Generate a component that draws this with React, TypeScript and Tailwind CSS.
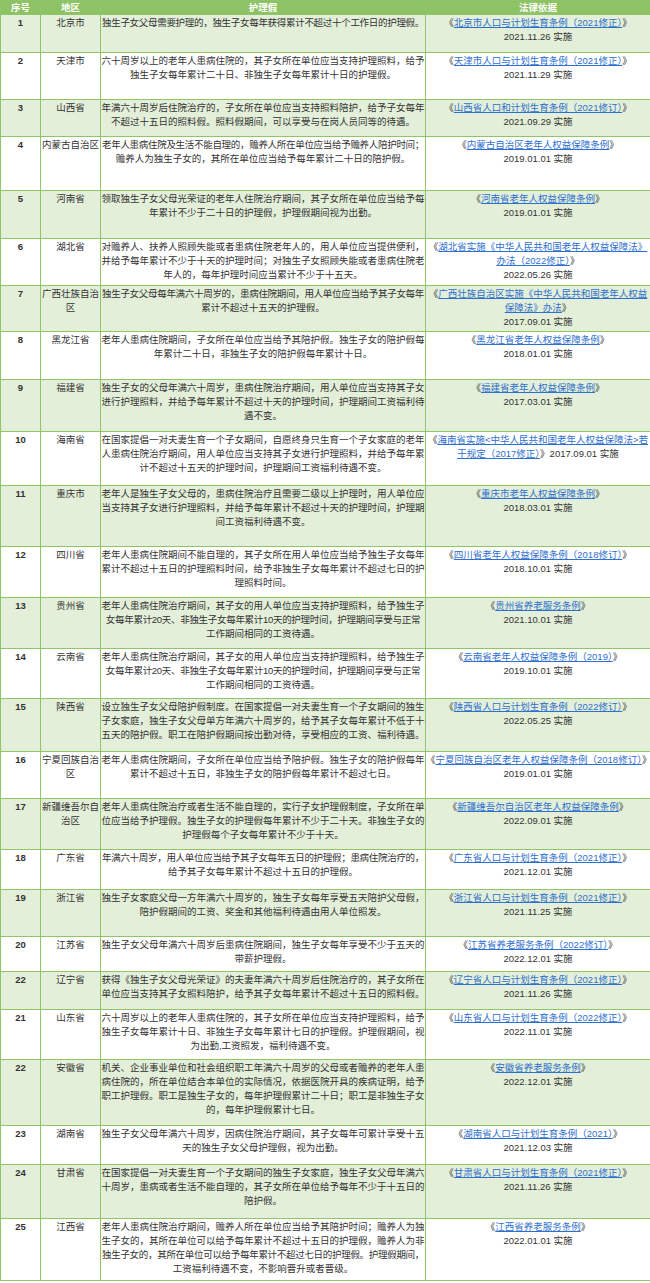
import React from "react";

type Row = { no: string; h: string; region: string[]; care: string[]; law: string[] };

const rows: Row[] = [
  { no: "1", h: "h-[38px]", region: ["北京市"], care: ["独生子女父母需要护理的，独生子女每年获得累计不超过十个工作日的护理假。"], law: ["《[北京市人口与计划生育条例（2021修正）]》", "2021.11.26 实施"] },
  { no: "2", h: "h-[47px]", region: ["天津市"], care: ["六十周岁以上的老年人患病住院的，其子女所在单位应当支持护理照料，给予", "独生子女每年累计二十日、非独生子女每年累计十日的护理假。"], law: ["《[天津市人口与计划生育条例（2021修正）]》", "2021.11.29 实施"] },
  { no: "3", h: "h-[37px]", region: ["山西省"], care: ["年满六十周岁后住院治疗的，子女所在单位应当支持照料陪护，给予子女每年", "不超过十五日的照料假。照料假期间，可以享受与在岗人员同等的待遇。"], law: ["《[山西省人口和计划生育条例（2021修订）]》", "2021.09.29 实施"] },
  { no: "4", h: "h-[54px]", region: ["内蒙古自治区"], care: ["老年人患病住院及生活不能自理的，赡养人所在单位应当给予赡养人陪护时间；", "赡养人为独生子女的，其所在单位应当给予每年累计二十日的陪护假。"], law: ["《[内蒙古自治区老年人权益保障条例]》", "2019.01.01 实施"] },
  { no: "5", h: "h-[48px]", region: ["河南省"], care: ["领取独生子女父母光荣证的老年人住院治疗期间，其子女所在单位应当给予每", "年累计不少于二十日的护理假，护理假期间视为出勤。"], law: ["《[河南省老年人权益保障条例]》", "2019.01.01 实施"] },
  { no: "6", h: "h-[47px]", region: ["湖北省"], care: ["对赡养人、扶养人照顾失能或者患病住院老年人的，用人单位应当提供便利，", "并给予每年累计不少于十天的护理时间；对独生子女照顾失能或者患病住院老", "年人的，每年护理时间应当累计不少于十五天。"], law: ["《[湖北省实施《中华人民共和国老年人权益保障法》]", "[办法（2022修正）]》", "2022.05.26 实施"] },
  { no: "7", h: "h-[46px]", region: ["广西壮族自治", "区"], care: ["独生子女父母每年满六十周岁的，患病住院期间，用人单位应当给予其子女每年", "累计不超过十五天的护理假。"], law: ["《[广西壮族自治区实施《中华人民共和国老年人权益]", "[保障法》办法]》", "2017.09.01 实施"] },
  { no: "8", h: "h-[48px]", region: ["黑龙江省"], care: ["老年人患病住院期间，子女所在单位应当给予其陪护假。独生子女的陪护假每", "年累计二十日，非独生子女的陪护假每年累计十日。"], law: ["《[黑龙江省老年人权益保障条例]》", "2018.01.01 实施"] },
  { no: "9", h: "h-[52px]", region: ["福建省"], care: ["独生子女的父母年满六十周岁，患病住院治疗期间，用人单位应当支持其子女", "进行护理照料，并给予每年累计不超过十天的护理时间，护理期间工资福利待", "遇不变。"], law: ["《[福建省老年人权益保障条例]》", "2017.03.01 实施"] },
  { no: "10", h: "h-[54px]", region: ["海南省"], care: ["在国家提倡一对夫妻生育一个子女期间，自愿终身只生育一个子女家庭的老年", "人患病住院治疗期间，用人单位应当支持其子女进行护理照料，并给予每年累", "计不超过十五天的护理时间，护理期间工资福利待遇不变。"], law: ["《[海南省实施<中华人民共和国老年人权益保障法>若]", "[干规定（2017修正）]》2017.09.01 实施"] },
  { no: "11", h: "h-[61px]", region: ["重庆市"], care: ["老年人是独生子女父母的，患病住院治疗且需要二级以上护理时，用人单位应", "当支持其子女进行护理照料，并给予每年累计不超过十天的护理时间，护理期", "间工资福利待遇不变。"], law: ["《[重庆市老年人权益保障条例]》", "2018.03.01 实施"] },
  { no: "12", h: "h-[51px]", region: ["四川省"], care: ["老年人患病住院期间不能自理的，其子女所在用人单位应当给予独生子女每年", "累计不超过十五日的护理照料时间，给予非独生子女每年累计不超过七日的护", "理照料时间。"], law: ["《[四川省老年人权益保障条例（2018修订）]》", "2018.10.01 实施"] },
  { no: "13", h: "h-[51px]", region: ["贵州省"], care: ["老年人患病住院治疗期间，其子女的用人单位应当支持护理照料，给予独生子", "女每年累计20天、非独生子女每年累计10天的护理时间，护理期间享受与正常", "工作期间相同的工资待遇。"], law: ["《[贵州省养老服务条例]》", "2021.10.01 实施"] },
  { no: "14", h: "h-[50px]", region: ["云南省"], care: ["老年人患病住院治疗期间，其子女的用人单位应当支持护理照料，给予独生子", "女每年累计20天、非独生子女每年累计10天的护理时间，护理期间享受与正常", "工作期间相同的工资待遇。"], law: ["《[云南省老年人权益保障条例（2019）]》", "2019.10.01 实施"] },
  { no: "15", h: "h-[53px]", region: ["陕西省"], care: ["设立独生子女父母陪护假制度。在国家提倡一对夫妻生育一个子女期间的独生", "子女家庭，独生子女父母单方年满六十周岁的，给予其子女每年累计不低于十", "五天的陪护假。职工在陪护假期间按出勤对待，享受相应的工资、福利待遇。"], law: ["《[陕西省人口与计划生育条例（2022修订）]》", "2022.05.25 实施"] },
  { no: "16", h: "h-[47px]", region: ["宁夏回族自治", "区"], care: ["老年人患病住院期间，子女所在单位应当给予陪护假。独生子女的陪护假每年", "累计不超过十五日，非独生子女的陪护假每年累计不超过七日。"], law: ["《[宁夏回族自治区老年人权益保障条例（2018修订）]》", "2019.01.01 实施"] },
  { no: "17", h: "h-[51px]", region: ["新疆维吾尔自", "治区"], care: ["老年人患病住院治疗或者生活不能自理的，实行子女护理假制度，子女所在单", "位应当给予护理假。独生子女的护理假每年累计不少于二十天。非独生子女的", "护理假每个子女每年累计不少于十天。"], law: ["《[新疆维吾尔自治区老年人权益保障条例]》", "2022.09.01 实施"] },
  { no: "18", h: "h-[40px]", region: ["广东省"], care: ["年满六十周岁，用人单位应当给予其子女每年五日的护理假；患病住院治疗的，", "给予其子女每年累计不超过十五日的护理假。"], law: ["《[广东省人口与计划生育条例（2021修正）]》", "2021.12.01 实施"] },
  { no: "19", h: "h-[47px]", region: ["浙江省"], care: ["独生子女家庭父母一方年满六十周岁的，独生子女每年享受五天陪护父母假，", "陪护假期间的工资、奖金和其他福利待遇由用人单位照发。"], law: ["《[浙江省人口与计划生育条例（2021修正）]》", "2021.11.25 实施"] },
  { no: "20", h: "h-[35px]", region: ["江苏省"], care: ["独生子女父母年满六十周岁后患病住院期间，独生子女每年享受不少于五天的", "带薪护理假。"], law: ["《[江苏省养老服务条例（2022修订）]》", "2022.12.01 实施"] },
  { no: "22", h: "h-[38px]", region: ["辽宁省"], care: ["获得《独生子女父母光荣证》的夫妻年满六十周岁后住院治疗的，其子女所在", "单位应当支持其子女照料陪护，给予其子女每年累计不超过十五日的照料假。"], law: ["《[辽宁省人口与计划生育条例（2021修正）]》", "2021.11.26 实施"] },
  { no: "21", h: "h-[50px]", region: ["山东省"], care: ["六十周岁以上的老年人患病住院的，其子女所在单位应当支持护理照料，给予", "独生子女每年累计十日、非独生子女每年累计七日的护理假。护理假期间，视", "为出勤,工资照发，福利待遇不变。"], law: ["《[山东省人口与计划生育条例（2022修正）]》", "2022.11.01 实施"] },
  { no: "22", h: "h-[66px]", region: ["安徽省"], care: ["机关、企业事业单位和社会组织职工年满六十周岁的父母或者赡养的老年人患", "病住院的，所在单位结合本单位的实际情况，依据医院开具的疾病证明，给予", "职工护理假。职工是独生子女的，每年护理假累计二十日；职工是非独生子女", "的，每年护理假累计七日。"], law: ["《[安徽省养老服务条例]》", "2022.12.01 实施"] },
  { no: "23", h: "h-[39px]", region: ["湖南省"], care: ["独生子女父母年满六十周岁，因病住院治疗期间，其子女每年可累计享受十五", "天的独生子女父母护理假，视为出勤。"], law: ["《[湖南省人口与计划生育条例（2021）]》", "2021.12.03 实施"] },
  { no: "24", h: "h-[54px]", region: ["甘肃省"], care: ["在国家提倡一对夫妻生育一个子女期间的独生子女家庭，独生子女父母年满六", "十周岁，患病或者生活不能自理的，其子女所在单位给予每年不少于十五日的", "陪护假。"], law: ["《[甘肃省人口与计划生育条例（2021修正）]》", "2021.11.26 实施"] },
  { no: "25", h: "h-[62px]", region: ["江西省"], care: ["老年人患病住院治疗期间，赡养人所在单位应当给予其陪护时间；赡养人为独", "生子女的，其所在单位可以给予每年累计不超过十五日的护理假，赡养人为非", "独生子女的，其所在单位可以给予每年累计不超过七日的护理假。护理假期间，", "工资福利待遇不变，不影响晋升或者晋级。"], law: ["《[江西省养老服务条例]》", "2022.01.01 实施"] },
];

function LawLine({ text }: { text: string }) {
  const parts = text.split(/(\[[^\]]*\])/).filter((p) => p.length > 0);
  return (
    <div className="whitespace-nowrap">
      {parts.map((p, i) =>
        p.startsWith("[") ? (
          <span key={i} className="text-[#2f6fce] underline underline-offset-1">
            {p.slice(1, -1)}
          </span>
        ) : (
          <span key={i}>{p}</span>
        )
      )}
    </div>
  );
}

export default function App() {
  return (
    <div className="w-[650px] bg-white font-['Liberation_Sans','Noto_Sans_CJK_SC',sans-serif] text-[#333333]">
      <table className="w-[650px] table-fixed border-collapse">
        <colgroup>
          <col className="w-[40px]" />
          <col className="w-[60px]" />
          <col className="w-[325px]" />
          <col className="w-[225px]" />
        </colgroup>
        <thead>
          <tr className="h-[14px] bg-[#8ec365] text-[9.5px] leading-[13px] font-bold text-white">
            <th className="border border-[#8fc46b] p-0 text-center font-bold">序号</th>
            <th className="border border-[#8fc46b] p-0 text-center font-bold">地区</th>
            <th className="border border-[#8fc46b] p-0 text-center font-bold">护理假</th>
            <th className="border border-[#8fc46b] p-0 text-center font-bold">法律依据</th>
          </tr>
        </thead>
        <tbody>
          {rows.map((r, idx) => (
            <tr key={idx} className={`${r.h} ${idx % 2 === 0 ? "bg-[#e3efd9]" : "bg-white"} text-[9.5px] leading-[14px]`}>
              <td className="border border-[#8fc46b] p-0 pt-px align-top text-center font-bold">{r.no}</td>
              <td className="border border-[#8fc46b] p-0 pt-px align-top text-center">
                {r.region.map((l, i) => (
                  <div key={i} className="whitespace-nowrap">{l}</div>
                ))}
              </td>
              <td className="border border-[#8fc46b] p-0 pt-px align-top text-center">
                {r.care.map((l, i) => (
                  <div key={i} className={`whitespace-nowrap ${l.length > 34 ? "tracking-[-0.3px]" : ""}`}>{l}</div>
                ))}
              </td>
              <td className="border border-[#8fc46b] p-0 pt-px align-top text-center text-[9.5px]">
                {r.law.map((l, i) => (
                  <LawLine key={i} text={l} />
                ))}
              </td>
            </tr>
          ))}
        </tbody>
      </table>
    </div>
  );
}
